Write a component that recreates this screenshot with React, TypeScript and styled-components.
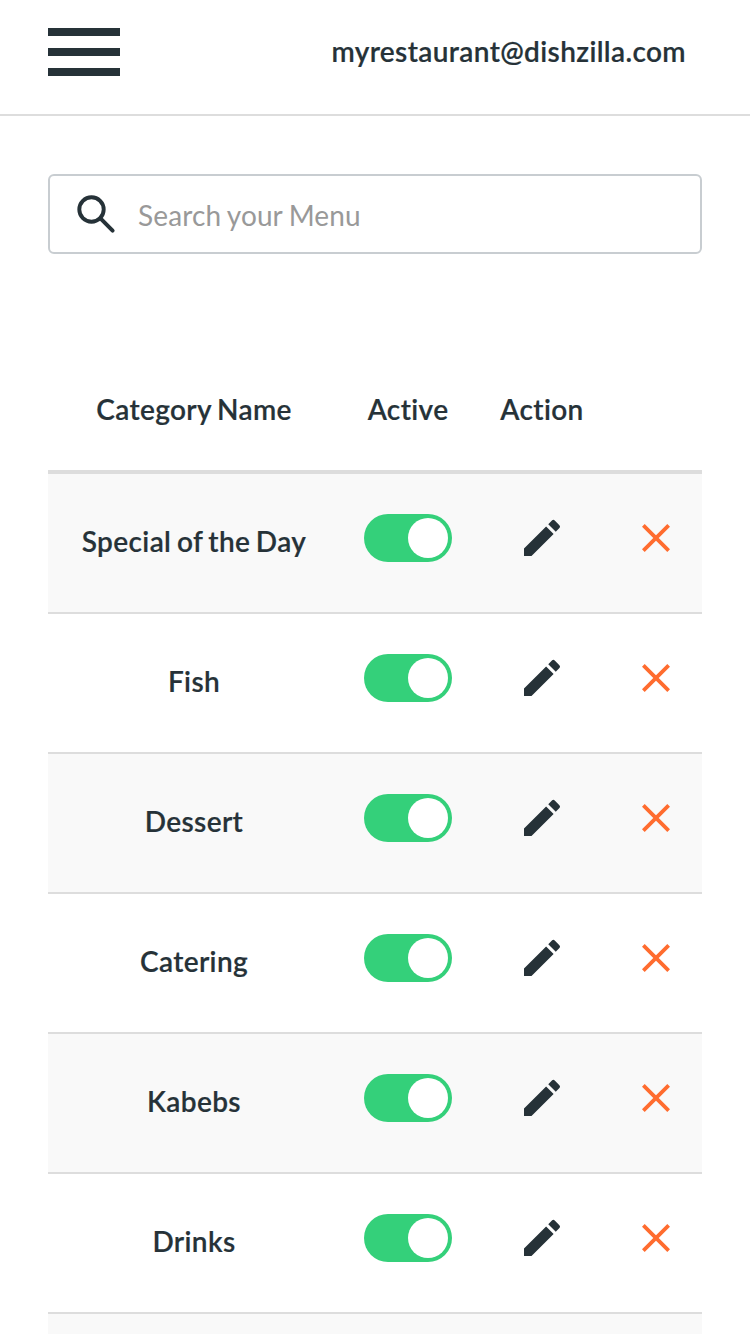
import React from 'react';
import styled, { createGlobalStyle } from 'styled-components';

const GlobalStyle = createGlobalStyle`
  * { box-sizing: border-box; }
  html { overflow: hidden; }
  body { margin: 0; background: #fff; color: #263238; font-family: Lato, sans-serif; font-size: 28px; font-variant-ligatures: none; }
`;
const Page = styled.div`
  height: 1334px;
  overflow: hidden;
  background: #fff;
`;
const Header = styled.header`
  height: 116px;
  padding: 28px 64px 0 48px;
  display: flex;
  justify-content: space-between;
  border-bottom: 2px solid #dddddd;
`;
const MenuButton = styled.button`
  width: 72px;
  height: 48px;
  padding: 0;
  border: 0;
  background: none;
  display: flex;
  flex-direction: column;
  justify-content: space-between;
`;
const MenuBar = styled.span`
  width: 72px;
  height: 8px;
  background: #263238;
`;
const Label = styled.span`
  line-height: 46px;
  font-weight: 600;
  letter-spacing: 0.37px;
  word-spacing: -1.7px;
  -webkit-text-stroke: 0.2px #263238;
`;
const Name = styled(Label)`
  padding-top: 4px;
`;
const SearchBox = styled.label`
  margin: 58px 48px 0;
  height: 80px;
  padding-left: 26px;
  display: flex;
  align-items: center;
  border: 2px solid #c8cdd1;
  border-radius: 6px;
`;
const SearchInput = styled.input`
  flex: 1;
  margin: 2px 0 0 22px;
  padding: 0;
  border: 0;
  outline: 0;
  background: transparent;
  font: inherit;
  letter-spacing: 0.12px;
  word-spacing: -1px;
  color: #263238;
  &::placeholder { color: #999; opacity: 1; }
`;
const Table = styled.div`
  margin: 96px 48px 0;
`;
const Row = styled.div<{ $shaded?: boolean }>`
  height: 140px;
  display: grid;
  grid-template-columns: 292px 136px 132px 96px;
  justify-items: center;
  padding-top: 40px;
  border-bottom: 2px solid #dddddd;
  background: ${p => (p.$shaded ? '#f9f9f9' : '#fff')};
`;
const HeadRow = styled(Row)`
  height: 124px;
  padding-top: 36px;
  border-bottom-width: 4px;
`;
const Toggle = styled.span`
  width: 88px;
  height: 48px;
  padding: 4px;
  display: flex;
  justify-content: flex-end;
  border-radius: 24px;
  background: #34d07a;
`;
const Knob = styled.span`
  width: 40px;
  height: 40px;
  border-radius: 50%;
  background: #fff;
`;
const IconButton = styled.button`
  height: 48px;
  padding: 0;
  border: 0;
  background: none;
  display: flex;
  align-items: center;
`;

const SearchIcon = () => (
  <svg width="40" height="40" viewBox="0 0 40 40" fill="none" stroke="#263238">
    <circle cx="15.5" cy="15.5" r="12.2" strokeWidth="3.9" />
    <path d="M24.2 24.2 36.6 36.6" strokeWidth="4" strokeLinecap="round" />
  </svg>
);
const PencilIcon = () => (
  <svg width="48" height="48" viewBox="0 0 24 24" fill="#263238">
    <path d="M3 17.25V21h3.75L17.81 9.94l-3.75-3.75L3 17.25zM20.71 7.04a.996.996 0 0 0 0-1.41l-2.34-2.34a.996.996 0 0 0-1.41 0l-1.83 1.83 3.75 3.75 1.83-1.83z" />
  </svg>
);
const CrossIcon = () => (
  <svg width="28" height="28" viewBox="0 0 28 28" stroke="#ff6c2f" strokeWidth="3.8">
    <path d="M1.35 1.35 26.65 26.65M26.65 1.35 1.35 26.65" />
  </svg>
);

const categories = ['Special of the Day', 'Fish', 'Dessert', 'Catering', 'Kabebs', 'Drinks', ''];

export default function App() {
  return (
    <Page>
      <GlobalStyle />
      <Header>
        <MenuButton aria-label="Menu"><MenuBar /><MenuBar /><MenuBar /></MenuButton>
        <Label>myrestaurant@dishzilla.com</Label>
      </Header>
      <SearchBox>
        <SearchIcon />
        <SearchInput placeholder="Search your Menu" />
      </SearchBox>
      <Table>
        <HeadRow>
          <Label>Category Name</Label>
          <Label>Active</Label>
          <Label>Action</Label>
        </HeadRow>
        {categories.map((name, i) => (
          <Row key={i} $shaded={i % 2 === 0}>
            <Name>{name}</Name>
            <Toggle><Knob /></Toggle>
            <IconButton aria-label="Edit"><PencilIcon /></IconButton>
            <IconButton aria-label="Delete"><CrossIcon /></IconButton>
          </Row>
        ))}
      </Table>
    </Page>
  );
}
